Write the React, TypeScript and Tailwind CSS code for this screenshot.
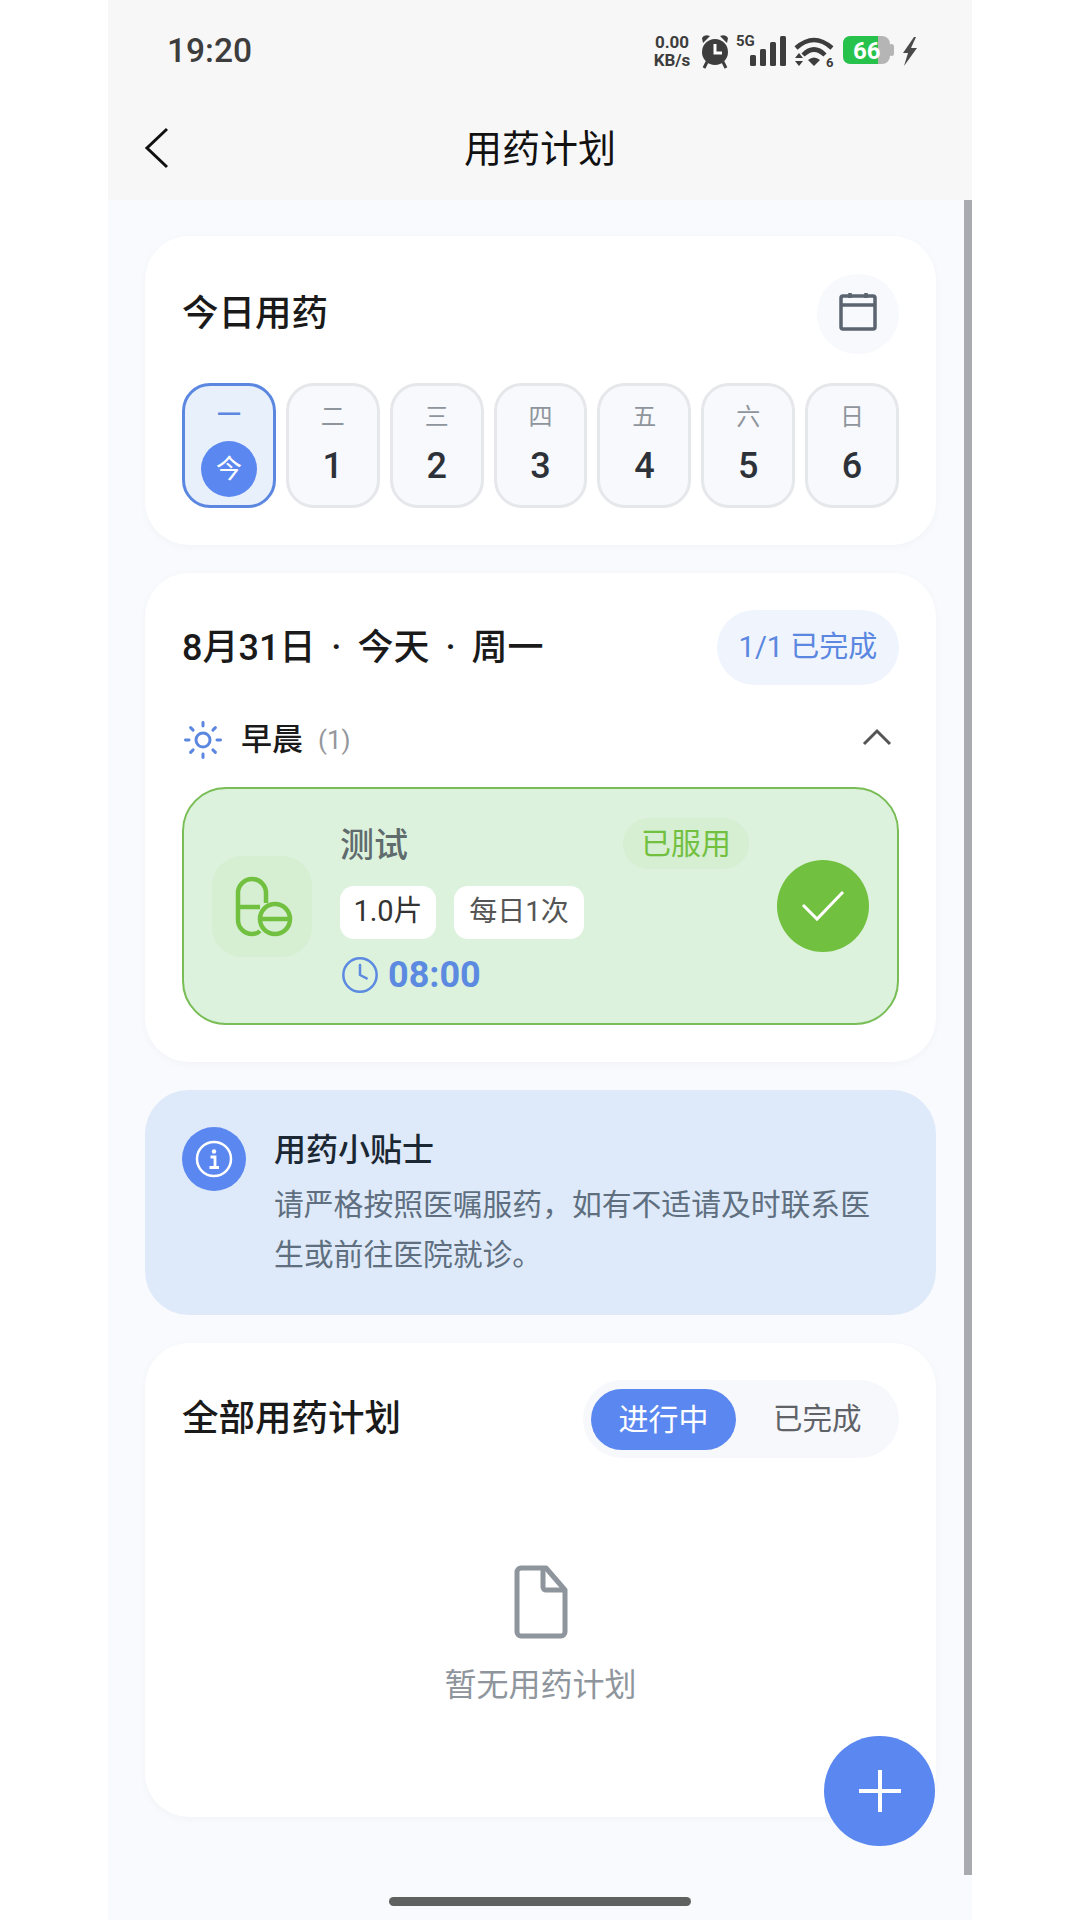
import { Clock, Sun } from "lucide-react";

const days = [
  { week: "二", date: "1" },
  { week: "三", date: "2" },
  { week: "四", date: "3" },
  { week: "五", date: "4" },
  { week: "六", date: "5" },
  { week: "日", date: "6" },
];

function StatusIcons() {
  return (
    <div className="flex items-center pt-[2px]">
      <div className="flex w-[40px] flex-col items-center text-[17px] leading-[18px] font-bold text-[#3d3d3d]">
        <span>0.00</span>
        <span>KB/s</span>
      </div>
      {/* alarm, 5G bars, wifi, battery, bolt */}
      <svg width="217" height="36" viewBox="0 0 217 36" className="ml-[8px]">
        <g fill="#3d3d3d">
          <circle cx="15" cy="19" r="13" />
          <path d="M3 10 L10 3 Q4 1 2 5 Z M27 10 L20 3 Q26 1 28 5 Z" />
          <path d="M7 29 L4 35 M23 29 L26 35" stroke="#3d3d3d" strokeWidth="3" />
        </g>
        <path d="M15 11 V20 H22" fill="none" stroke="#fff" strokeWidth="3" />
        <text x="36" y="13" fontSize="15" fontWeight="700" fill="#3d3d3d" fontFamily="Roboto">
          5G
        </text>
        <g fill="#3d3d3d">
          <rect x="50" y="22" width="6" height="11" rx="1.5" />
          <rect x="60" y="16" width="6" height="17" rx="1.5" />
          <rect x="70" y="9" width="6" height="24" rx="1.5" />
          <rect x="80" y="3" width="6" height="30" rx="1.5" />
        </g>
        <g fill="none" stroke="#3d3d3d" strokeWidth="4.5">
          <path d="M96 15 Q114 -1 132 15" />
          <path d="M103 22 Q114 11 125 22" />
        </g>
        <g fill="#3d3d3d">
          <path d="M108 27 Q114 22 120 27 L114 33 Z" />
          <path d="M95 25 L99 20 L103 25 Z M95 28 L103 28 L99 33 Z" />
        </g>
        <text x="126" y="34" fontSize="13" fontWeight="700" fill="#3d3d3d" fontFamily="Roboto">
          6
        </text>
        <rect x="143" y="3" width="47" height="28" rx="8" fill="#b5b5b5" />
        <rect x="189" y="11" width="5" height="12" rx="2.5" fill="#b5b5b5" />
        <path d="M151 3 H178 V31 H151 Q143 31 143 23 V11 Q143 3 151 3 Z" fill="#27c24c" />
        <text x="153" y="26" fontSize="24" fontWeight="700" fill="#fff" fontFamily="Roboto">
          66
        </text>
        <path d="M214 4 L203 20 H208 L204 33 L217 15 H211 L216 4 Z" fill="#4a4a4a" />
      </svg>
    </div>
  );
}

function CalendarIcon() {
  return (
    <svg width="40" height="42" viewBox="0 3 40 42" fill="none" stroke="#5b646f" strokeWidth="3.5">
      <rect x="3" y="6" width="34" height="33" rx="2" />
      <path d="M3 15 H37 M12 1 V8 M28 1 V8" />
    </svg>
  );
}

function PillIcon() {
  return (
    <svg width="100" height="100" viewBox="0 0 100 100" fill="none" stroke="#72c040" strokeWidth="4.5">
      <path d="M54 47 V37 a14 14 0 0 0 -28 0 V64 a14 14 0 0 0 14 14 c3 0 6 -1 8 -3" />
      <path d="M26 51 H48" />
      <circle cx="63" cy="63" r="15" />
      <path d="M48 63 H78" />
    </svg>
  );
}

function InfoIcon() {
  return (
    <svg width="38" height="38" viewBox="0 0 38 38" fill="none" stroke="#fff">
      <circle cx="19" cy="19" r="17" strokeWidth="2.5" />
      <circle cx="19" cy="11.5" r="2.2" fill="#fff" stroke="none" />
      <path d="M15.5 17 H20 V27 M14.5 27.5 H24" strokeWidth="2.8" />
    </svg>
  );
}

function DocIcon() {
  return (
    <svg width="54" height="74" viewBox="0 0 54 74" fill="none" stroke="#8f959c" strokeWidth="5" strokeLinejoin="round">
      <path d="M7 3 H32 L51 25 V67 a4 4 0 0 1 -4 4 H7 a4 4 0 0 1 -4 -4 V7 a4 4 0 0 1 4 -4 Z" />
      <path d="M29 3 V22 a3 3 0 0 0 3 3 H51" />
    </svg>
  );
}

export default function App() {
  return (
    <div className="flex h-[1920px] w-[1080px] justify-center bg-white font-['Roboto','Noto_Sans_CJK_SC',sans-serif]">
      <div className="relative flex h-[1920px] w-[864px] flex-col overflow-hidden bg-[#f8fafd]">
        <div className="flex h-[100px] items-center justify-between bg-[#f7f7f7] pr-[55px] pl-[59px]">
          <span className="pt-[3px] text-[33.5px] font-medium text-[#3d3d3d]">19:20</span>
          <StatusIcons />
        </div>

        <div className="relative flex h-[100px] items-center justify-center bg-[#f7f7f7] pb-[2px]">
          <svg width="26" height="42" viewBox="0 0 26 42" fill="none" stroke="#111" strokeWidth="3" className="absolute top-[27px] left-[36px]">
            <path d="M23 2 L3 21 L23 40" />
          </svg>
          <span className="text-[38px] text-[#111]">用药计划</span>
        </div>

        <div className="flex flex-col gap-[28px] pt-[36px] pr-[36px] pl-[37px]">
          <section className="h-[309px] rounded-[44px] bg-white px-[37px] pt-[38px] shadow-[0_2px_8px_rgba(0,0,0,0.03)]">
            <div className="flex h-[80px] items-center justify-between">
              <h2 className="text-[36.5px] font-medium text-[#1a1a1a]">今日用药</h2>
              <div className="flex h-[80px] w-[82px] items-center justify-center rounded-full bg-[#f7f9fc]">
                <CalendarIcon />
              </div>
            </div>
            <div className="mt-[29px] flex gap-[10px]">
              <div className="flex h-[125px] flex-1 flex-col items-center rounded-[28px] border-[3px] border-[#5b87e0] bg-[#e8f0fc] pt-[12px]">
                <span className="text-[24px] leading-[34px] font-medium text-[#5b87e0]">一</span>
                <span className="mt-[9px] flex h-[56px] w-[56px] items-center justify-center rounded-full bg-[#5b87f0] text-[26px] text-white">
                  今
                </span>
              </div>
              {days.map((day) => (
                <div
                  key={day.week}
                  className="flex h-[125px] flex-1 flex-col items-center rounded-[28px] border-[3px] border-[#e6e7eb] bg-[#f8f9fc] pt-[14px]"
                >
                  <span className="text-[24px] leading-[34px] text-[#8f959c]">{day.week}</span>
                  <span className="mt-[10px] text-[36px] leading-[44px] font-medium text-[#2d3238]">
                    {day.date}
                  </span>
                </div>
              ))}
            </div>
          </section>

          <section className="h-[489px] rounded-[44px] bg-white px-[37px] pt-[37px] shadow-[0_2px_8px_rgba(0,0,0,0.03)]">
            <div className="flex h-[75px] items-center justify-between">
              <h2 className="text-[36px] font-medium whitespace-pre text-[#1a1a1a] [word-spacing:7px]">8月31日 · 今天 · 周一</h2>
              <span className="flex h-[75px] w-[182px] items-center justify-center rounded-full bg-[#f0f5fd] text-[29px] text-[#5b87e0]">
                1/1 已完成
              </span>
            </div>
            <div className="mt-[27px] flex h-[56px] items-center">
              <Sun size={42} strokeWidth={1.7} className="text-[#5b87e0]" />
              <span className="ml-[17px] text-[31px] font-medium text-[#1a1a1a]">早晨</span>
              <span className="ml-[15px] text-[26px] text-[#94979c]">(1)</span>
              <svg width="30" height="18" viewBox="0 0 30 18" fill="none" stroke="#555" strokeWidth="3" className="mr-[7px] mb-[7px] ml-auto">
                <path d="M2 16 L15 3 L28 16" />
              </svg>
            </div>
            <div className="mt-[19px] flex h-[238px] items-center gap-[28px] rounded-[44px] border-[2.5px] border-[#78bd55] bg-[#ddf2dd] pr-[28px] pl-[28px]">
              <div className="flex h-[101px] w-[100px] items-center justify-center rounded-[30px] bg-[#d6eed2]">
                <PillIcon />
              </div>
              <div className="flex w-[409px] flex-col pt-[6px]">
                <div className="flex items-center justify-between">
                  <span className="pt-[3px] text-[34px] font-medium text-[#5f6b6d]">测试</span>
                  <span className="flex h-[51px] w-[126px] items-center justify-center rounded-full bg-[#d6eed2] text-[30px] text-[#72c040]">
                    已服用
                  </span>
                </div>
                <div className="mt-[15px] flex gap-[18px]">
                  <span className="flex h-[53px] w-[96px] items-center justify-center rounded-[14px] bg-white text-[29px] text-[#333]">
                    1.0片
                  </span>
                  <span className="flex h-[53px] w-[130px] items-center justify-center rounded-[14px] bg-white text-[28px] text-[#555]">
                    每日1次
                  </span>
                </div>
                <div className="mt-[9px] flex items-center gap-[8px]">
                  <Clock size={40} strokeWidth={1.5} className="text-[#5b8ae0]" />
                  <span className="text-[36px] font-bold text-[#5b8ae0]">08:00</span>
                </div>
              </div>
              <div className="flex h-[92px] w-[92px] items-center justify-center rounded-full bg-[#72c040]">
                <svg width="44" height="32" viewBox="0 0 44 32" fill="none" stroke="#fff" strokeWidth="3">
                  <path d="M2 15 L16 29 L42 2" />
                </svg>
              </div>
            </div>
          </section>

          <section className="flex h-[225px] gap-[28px] rounded-[44px] bg-[#deeaf9] pt-[37px] pl-[37px]">
            <div className="flex h-[64px] w-[64px] items-center justify-center rounded-full bg-[#5b87f0]">
              <InfoIcon />
            </div>
            <div className="flex w-[600px] flex-col">
              <h3 className="text-[32px] leading-[46px] font-medium text-[#1b2733]">用药小贴士</h3>
              <p className="mt-[7px] text-[29.8px] leading-[50px] text-[#5f6f80]">
                请严格按照医嘱服药，如有不适请及时联系医生或前往医院就诊。
              </p>
            </div>
          </section>

          <section className="flex h-[474px] flex-col rounded-[44px] bg-white px-[37px] pt-[37px] shadow-[0_2px_8px_rgba(0,0,0,0.03)]">
            <div className="flex h-[78px] items-center justify-between">
              <h2 className="text-[36.5px] font-medium text-[#1a1a1a]">全部用药计划</h2>
              <div className="flex h-[78px] w-[316px] items-center rounded-full bg-[#f7f8fc] pl-[8px]">
                <span className="flex h-[61px] w-[145px] items-center justify-center rounded-full bg-[#5b87f0] text-[30px] text-white">
                  进行中
                </span>
                <span className="ml-[37px] text-[29.5px] text-[#5f6368]">已完成</span>
              </div>
            </div>
            <div className="mt-[107px] flex flex-col items-center">
              <DocIcon />
              <span className="mt-[22px] text-[32px] text-[#8f959c]">暂无用药计划</span>
            </div>
          </section>
        </div>

        {/* scrollbar, floating button and gesture bar sit over the page */}
        <div className="absolute top-[200px] right-0 h-[1675px] w-[8px] bg-[#a9abb0]" />
        <button className="absolute top-[1736px] left-[716px] flex h-[110px] w-[111px] items-center justify-center rounded-full bg-[#5b87f0]">
          <svg width="42" height="42" viewBox="0 0 42 42" stroke="#fff" strokeWidth="4">
            <path d="M21 0 V42 M0 21 H42" />
          </svg>
        </button>
        <div className="absolute top-[1897px] left-[281px] h-[9px] w-[302px] rounded-full bg-[#5f6160]" />
      </div>
    </div>
  );
}
